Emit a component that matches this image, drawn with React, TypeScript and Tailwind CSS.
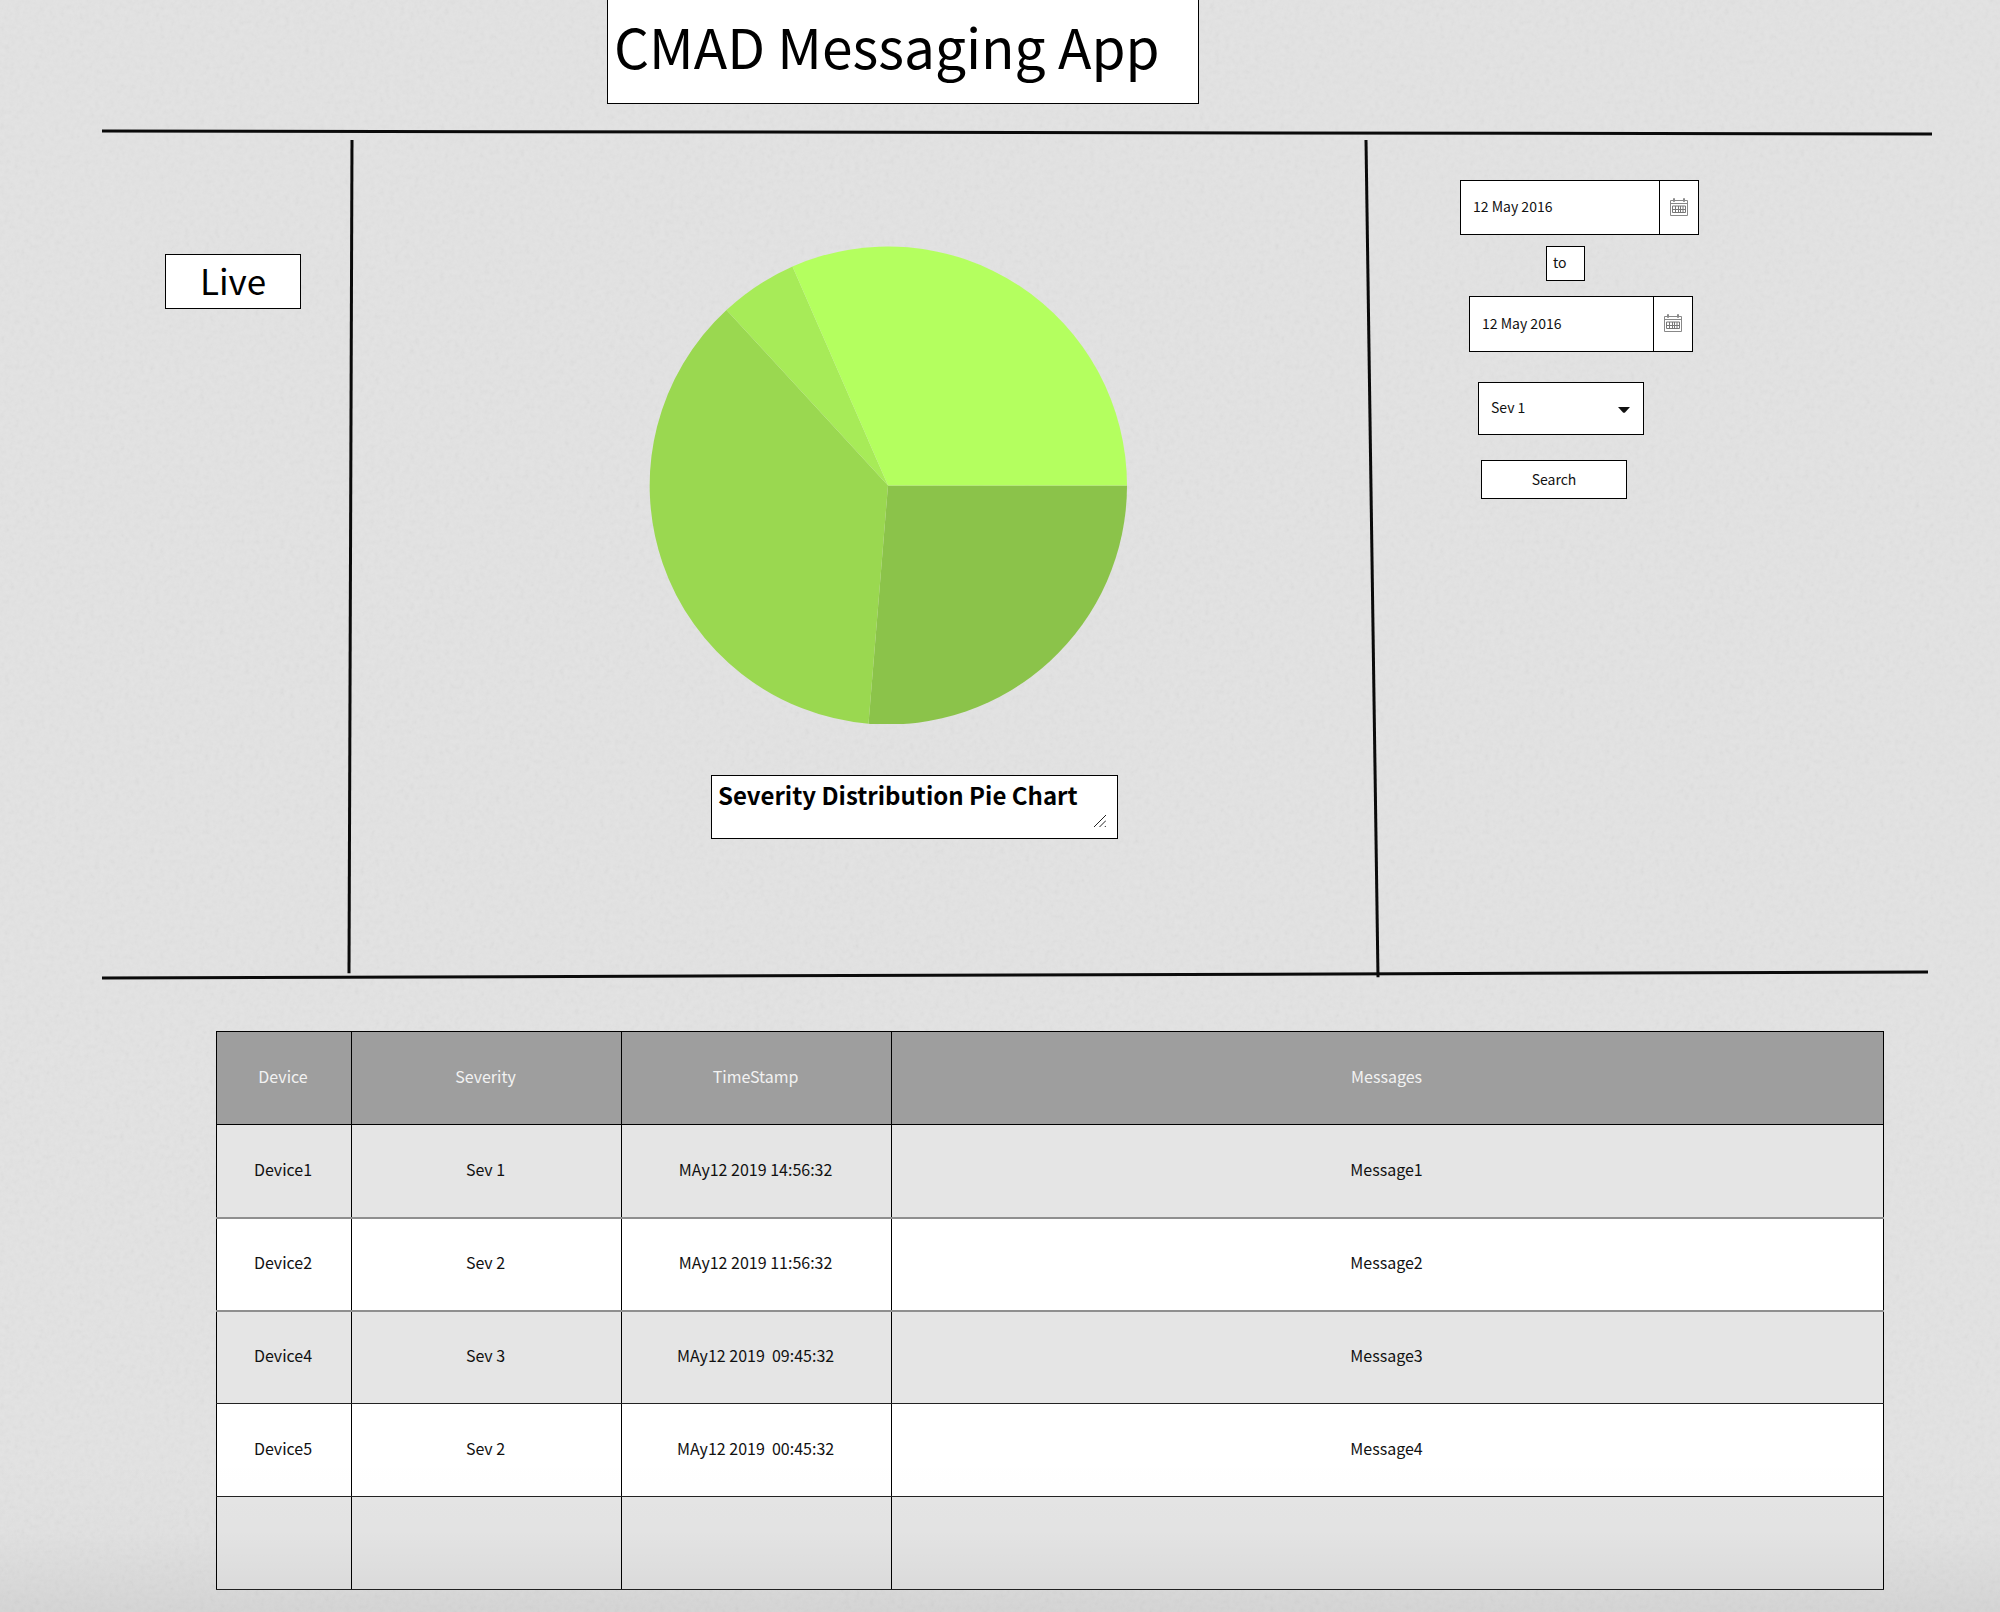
import React from "react";

const slices = [
  { d: "M239 239.500H478A239 239 0 0 1 219.500 477.700Z", fill: "#8bc34a" },
  { d: "M239 239.500L219.500 477.700A239 239 0 0 1 77.500 64Z", fill: "#9ad850" },
  { d: "M239 239.500L77.500 64A239 239 0 0 1 143.500 20.400Z", fill: "#a7eb58" },
  { d: "M239 239.500L143.500 20.400A239 239 0 0 1 478 239.500Z", fill: "#b4ff5f" },
];

const columns = ["Device", "Severity", "TimeStamp", "Messages"];

const rows = [
  ["Device1", "Sev 1", "MAy12 2019 14:56:32", "Message1"],
  ["Device2", "Sev 2", "MAy12 2019 11:56:32", "Message2"],
  ["Device4", "Sev 3", "MAy12 2019  09:45:32", "Message3"],
  ["Device5", "Sev 2", "MAy12 2019  00:45:32", "Message4"],
  ["", "", "", ""],
];

function PaperGrain() {
  return (
    <svg className="pointer-events-none absolute inset-0 -z-10 h-full w-full opacity-10" aria-hidden="true">
      <filter id="grain">
        <feTurbulence type="fractalNoise" baseFrequency="0.2" numOctaves="3" />
        <feColorMatrix type="saturate" values="0" />
      </filter>
      <rect width="100%" height="100%" filter="url(#grain)" />
    </svg>
  );
}

function Rule({ className, x1, y1, x2, y2 }: { className: string; x1: string; y1: string; x2: string; y2: string }) {
  return (
    <svg className={"block overflow-visible " + className} aria-hidden="true">
      <line x1={x1} y1={y1} x2={x2} y2={y2} stroke="#0a0a0a" strokeWidth="3" />
    </svg>
  );
}

function CalendarIcon() {
  return (
    <svg width="18" height="18" viewBox="0 0 18 18" fill="none" stroke="#888" aria-hidden="true">
      <path d="M3 2.500H.5V17.500H17.500V2.500H15M5 2.500H13M.5 5.500H17.500" />
      <path d="M3.500.5H4.500V3.500H3.500ZM13.500.5H14.500V3.500H13.500Z" />
      <path d="M2.500 8H15.500V14.500H2.500ZM2.500 11.500H15.500M5.500 8V14.500M8.500 8V14.500M10.500 8V14.500M13 8V14.500" stroke="#777" />
    </svg>
  );
}

function DateField({ label, className }: { label: string; className: string }) {
  return (
    <div className={"flex border border-black bg-white " + className}>
      <input aria-label={label} type="text" defaultValue="12 May 2016" className="min-w-0 flex-1 bg-transparent pb-0.5 pl-3 text-[14px] outline-none" />
      <button type="button" aria-label={"Choose " + label} className="flex w-[39px] items-center justify-center border-l border-black pb-0.5">
        <CalendarIcon />
      </button>
    </div>
  );
}

export default function App() {
  return (
    <div className="relative isolate min-h-screen bg-[#e3e3e3] pb-5 font-['Noto_Sans_CJK_SC','Noto_Sans',sans-serif] text-[#111]">
      <PaperGrain />
      <header className="pl-[607px]">
        <h1 className="flex h-[104px] w-[592px] items-center whitespace-nowrap border border-t-0 border-black bg-white pb-3 pl-1.5 text-[55px] leading-none text-black">
          CMAD Messaging App
        </h1>
      </header>

      <div className="ml-[102px] mr-[68px]">
        <Rule className="mt-6 h-[7px] w-full" x1="0" y1="3" x2="100%" y2="6" />
        <main className="grid grid-cols-[246fr_6px_1010fr_16px_552fr]">
          <section className="pl-[63px] pt-[119px]">
            <button type="button" className="h-[55px] w-[136px] border border-black bg-white pb-1 text-[35px] leading-none text-black">Live</button>
          </section>
          <Rule className="h-full w-full" x1="4" y1="5" x2="1" y2="100.5%" />
          <section className="flex flex-col items-center pb-[130px] pl-[58px] pt-[111px]">
            <svg width="478" height="478" viewBox="0 0 478 478" role="img" aria-label="Severity distribution">
              {slices.map((s) => (
                <path key={s.fill} d={s.d} fill={s.fill} />
              ))}
            </svg>
            <div className="relative ml-[53px] mt-[51px] flex">
              <textarea
                aria-label="Chart caption"
                defaultValue="Severity Distribution Pie Chart"
                className="h-16 w-[407px] resize-none overflow-hidden whitespace-nowrap border border-black bg-white px-1.5 py-[3px] text-[24px] font-bold leading-8 text-black outline-none"
              />
              <svg className="absolute bottom-3 right-3 h-3 w-3" viewBox="0 0 12 12" stroke="#222" fill="none" aria-hidden="true">
                <path d="M0 12L12 0M5.500 12L12 5.500M10.800 12L12 10.800" />
              </svg>
            </div>
          </section>
          <Rule className="h-full w-full" x1="2" y1="5" x2="14" y2="101%" />
          <form className="flex flex-col items-start pl-20 pt-[45px]" onSubmit={(e) => e.preventDefault()}>
            <DateField label="start date" className="h-[55px] w-[239px]" />
            <span className="ml-[86px] mt-[11px] flex h-[35px] w-[39px] items-center border border-black bg-white pb-0.5 pl-1.5 text-[14px]">to</span>
            <DateField label="end date" className="ml-[9px] mt-[15px] h-[56px] w-[224px]" />
            <div className="relative ml-[18px] mt-[30px] h-[53px] w-[166px]">
              <select aria-label="Severity" className="h-full w-full appearance-none border border-black bg-white pb-0.5 pl-3 text-[14px] outline-none">
                <option>Sev 1</option>
                <option>Sev 2</option>
                <option>Sev 3</option>
              </select>
              <svg className="pointer-events-none absolute right-3.5 top-[25px] h-1.5 w-3" viewBox="0 0 12 6" aria-hidden="true">
                <path d="M0 0H12L7 5.500Q6 6.200 5 5.500Z" fill="#111" />
              </svg>
            </div>
            <button type="submit" className="ml-[21px] mt-[25px] h-[39px] w-[146px] border border-black bg-white text-[14px]">Search</button>
          </form>
        </main>
        <Rule className="h-[11px] w-full pr-1" x1="0" y1="9" x2="100%" y2="3" />
      </div>

      <div className="ml-[216px] mr-[116px] mt-[51px]">
        <table className="w-full table-fixed border-collapse border border-black bg-[#e5e5e5] text-center text-[16px]">
          <colgroup>
            <col className="w-[8.1%]" />
            <col className="w-[16.2%]" />
            <col className="w-[16.2%]" />
            <col />
          </colgroup>
          <thead>
            <tr className="h-[93px] bg-[#9e9e9e] text-[#f2f2f2]">
              {columns.map((c) => (
                <th key={c} scope="col" className="border border-black pb-1 pr-0.5 font-normal">{c}</th>
              ))}
            </tr>
          </thead>
          <tbody>
            {rows.map((r, i) => (
              <tr key={i} className="h-[93px] even:bg-white">
                {r.map((cell, j) => (
                  <td
                    key={j}
                    className={
                      "whitespace-pre border border-black pb-1 pr-0.5 " +
                      (i < 2 ? "border-b-2 border-b-[#8f8f8f]" : "border-b-[#222]")
                    }
                  >
                    {cell}
                  </td>
                ))}
              </tr>
            ))}
          </tbody>
        </table>
      </div>
      <div className="pointer-events-none absolute inset-x-0 bottom-0 h-40 bg-linear-to-b from-black/0 via-black/1 to-black/6" />
    </div>
  );
}
